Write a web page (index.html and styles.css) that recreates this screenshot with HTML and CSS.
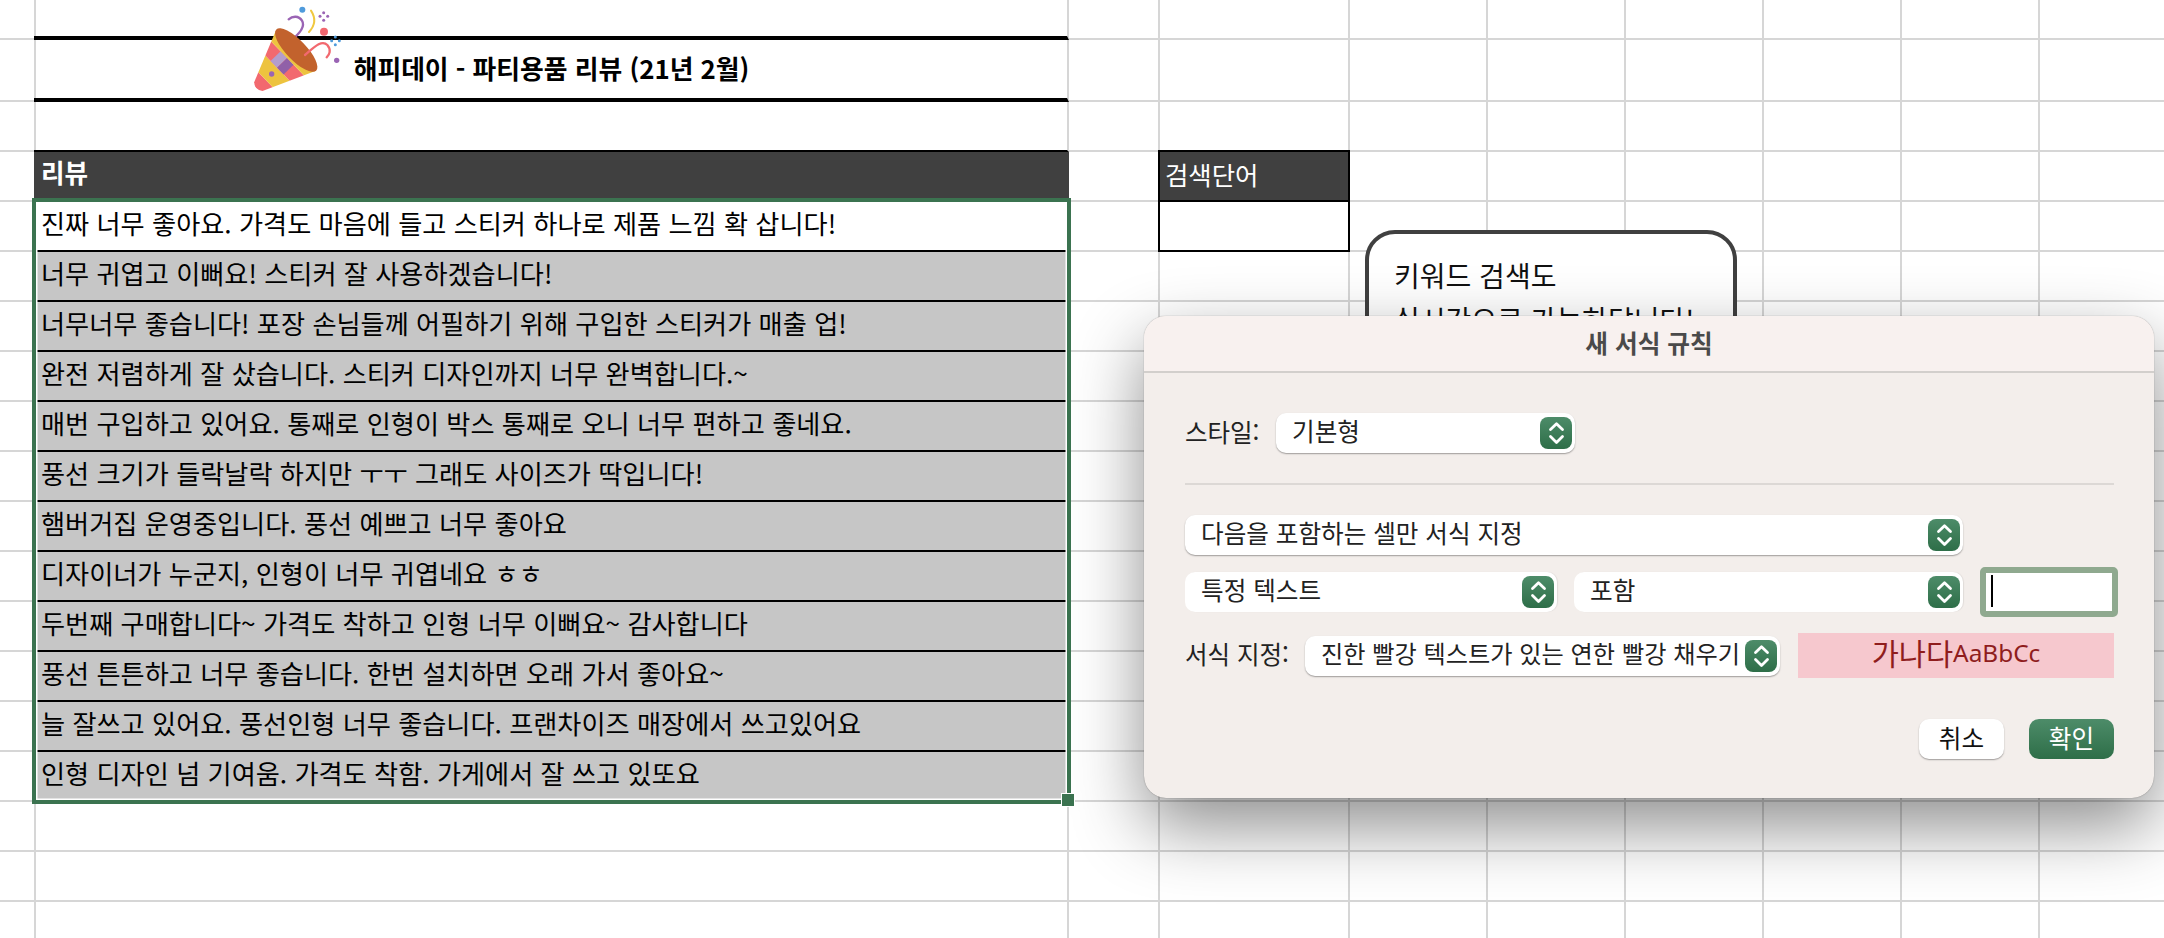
FILE: index.html
```html
<!DOCTYPE html>
<html lang="ko">
<head>
<meta charset="utf-8">
<title>새 서식 규칙</title>
<link rel="stylesheet" href="styles.css">
</head>
<body>
<main class="sheet">
  <div class="grid">
    <!-- row 0 -->
    <div class="c"></div><div class="c band"></div><div class="c"></div><div class="c"></div><div class="c"></div><div class="c"></div><div class="c"></div><div class="c"></div><div class="c"></div><div class="c"></div>
    <!-- row 1 -->
    <div class="c"></div><div class="c band title">해피데이 - 파티용품 리뷰 (21년 2월)</div><div class="c"></div><div class="c"></div><div class="c"></div><div class="c"></div><div class="c"></div><div class="c"></div><div class="c"></div><div class="c"></div>
    <!-- row 2 -->
    <div class="c"></div><div class="c blank"></div><div class="c"></div><div class="c"></div><div class="c"></div><div class="c"></div><div class="c"></div><div class="c"></div><div class="c"></div><div class="c"></div>
    <!-- row 3 -->
    <div class="c"></div><div class="c head">리뷰</div><div class="c"></div><div class="c search-head">검색단어</div><div class="c"></div><div class="c"></div><div class="c"></div><div class="c"></div><div class="c"></div><div class="c"></div>
    <!-- row 4 -->
    <div class="c"></div><div class="c review first">진짜 너무 좋아요. 가격도 마음에 들고 스티커 하나로 제품 느낌 확 삽니다!</div><div class="c"></div><div class="c search-input"></div><div class="c"></div><div class="c"></div><div class="c"></div><div class="c"></div><div class="c"></div><div class="c"></div>
    <!-- row 5 -->
    <div class="c"></div><div class="c review">너무 귀엽고 이뻐요! 스티커 잘 사용하겠습니다!</div><div class="c"></div><div class="c"></div><div class="c"></div><div class="c"></div><div class="c"></div><div class="c"></div><div class="c"></div><div class="c"></div>
    <!-- row 6 -->
    <div class="c"></div><div class="c review">너무너무 좋습니다! 포장 손님들께 어필하기 위해 구입한 스티커가 매출 업!</div><div class="c"></div><div class="c"></div><div class="c"></div><div class="c"></div><div class="c"></div><div class="c"></div><div class="c"></div><div class="c"></div>
    <!-- row 7 -->
    <div class="c"></div><div class="c review">완전 저렴하게 잘 샀습니다. 스티커 디자인까지 너무 완벽합니다.~</div><div class="c"></div><div class="c"></div><div class="c"></div><div class="c"></div><div class="c"></div><div class="c"></div><div class="c"></div><div class="c"></div>
    <!-- row 8 -->
    <div class="c"></div><div class="c review">매번 구입하고 있어요. 통째로 인형이 박스 통째로 오니 너무 편하고 좋네요.</div><div class="c"></div><div class="c"></div><div class="c"></div><div class="c"></div><div class="c"></div><div class="c"></div><div class="c"></div><div class="c"></div>
    <!-- row 9 -->
    <div class="c"></div><div class="c review">풍선 크기가 들락날락 하지만 ㅜㅜ 그래도 사이즈가 딱입니다!</div><div class="c"></div><div class="c"></div><div class="c"></div><div class="c"></div><div class="c"></div><div class="c"></div><div class="c"></div><div class="c"></div>
    <!-- row 10 -->
    <div class="c"></div><div class="c review">햄버거집 운영중입니다. 풍선 예쁘고 너무 좋아요</div><div class="c"></div><div class="c"></div><div class="c"></div><div class="c"></div><div class="c"></div><div class="c"></div><div class="c"></div><div class="c"></div>
    <!-- row 11 -->
    <div class="c"></div><div class="c review">디자이너가 누군지, 인형이 너무 귀엽네요 ㅎㅎ</div><div class="c"></div><div class="c"></div><div class="c"></div><div class="c"></div><div class="c"></div><div class="c"></div><div class="c"></div><div class="c"></div>
    <!-- row 12 -->
    <div class="c"></div><div class="c review">두번째 구매합니다~ 가격도 착하고 인형 너무 이뻐요~ 감사합니다</div><div class="c"></div><div class="c"></div><div class="c"></div><div class="c"></div><div class="c"></div><div class="c"></div><div class="c"></div><div class="c"></div>
    <!-- row 13 -->
    <div class="c"></div><div class="c review">풍선 튼튼하고 너무 좋습니다. 한번 설치하면 오래 가서 좋아요~</div><div class="c"></div><div class="c"></div><div class="c"></div><div class="c"></div><div class="c"></div><div class="c"></div><div class="c"></div><div class="c"></div>
    <!-- row 14 -->
    <div class="c"></div><div class="c review">늘 잘쓰고 있어요. 풍선인형 너무 좋습니다. 프랜차이즈 매장에서 쓰고있어요</div><div class="c"></div><div class="c"></div><div class="c"></div><div class="c"></div><div class="c"></div><div class="c"></div><div class="c"></div><div class="c"></div>
    <!-- row 15 -->
    <div class="c"></div><div class="c review">인형 디자인 넘 기여움. 가격도 착함. 가게에서 잘 쓰고 있또요</div><div class="c"></div><div class="c"></div><div class="c"></div><div class="c"></div><div class="c"></div><div class="c"></div><div class="c"></div><div class="c"></div>
    <!-- row 16 -->
    <div class="c"></div><div class="c"></div><div class="c"></div><div class="c"></div><div class="c"></div><div class="c"></div><div class="c"></div><div class="c"></div><div class="c"></div><div class="c"></div>
    <!-- row 17 -->
    <div class="c"></div><div class="c"></div><div class="c"></div><div class="c"></div><div class="c"></div><div class="c"></div><div class="c"></div><div class="c"></div><div class="c"></div><div class="c"></div>
    <!-- row 18 -->
    <div class="c"></div><div class="c"></div><div class="c"></div><div class="c"></div><div class="c"></div><div class="c"></div><div class="c"></div><div class="c"></div><div class="c"></div><div class="c"></div>
  </div>

  <svg class="popper" viewBox="0 0 390 300" aria-hidden="true">
    <defs>
      <clipPath id="cone"><path d="M0,-18 Q-16,0 0,18 L158,86 L158,-86 Z"/></clipPath>
    </defs>
    <path d="M178,125 C205,105 228,82 216,62 C206,46 187,48 176,58" fill="none" stroke="#9a64b4" stroke-width="7" stroke-linecap="round"/>
    <path d="M243,32 C258,55 254,78 237,96" fill="none" stroke="#f0c840" stroke-width="6" stroke-linecap="round"/>
    <circle cx="217" cy="29" r="9" fill="#4f9bdc"/>
    <g fill="#9a64b4">
      <circle cx="281" cy="38" r="4.5"/><circle cx="281" cy="61" r="4.5"/><circle cx="270" cy="49" r="4.5"/><circle cx="293" cy="49" r="4.5"/>
    </g>
    <circle cx="282" cy="95" r="12" fill="#f2676f"/>
    <g fill="#4f9bdc">
      <circle cx="316" cy="111" r="4.5"/><circle cx="316" cy="134" r="4.5"/><circle cx="305" cy="122" r="4.5"/><circle cx="328" cy="122" r="4.5"/>
    </g>
    <circle cx="320" cy="181" r="8" fill="#9a64b4"/>
    <g transform="translate(85,260) rotate(-44)">
      <g clip-path="url(#cone)">
        <rect x="-20" y="-100" width="50" height="200" fill="#f2696f"/>
        <rect x="30" y="-100" width="50" height="200" fill="#edc33f"/>
        <rect x="80" y="-100" width="42" height="200" fill="#f2696f"/>
        <rect x="80" y="-30" width="42" height="28" fill="#b39dcc"/>
        <rect x="80" y="-2" width="42" height="28" fill="#9060a8"/>
        <rect x="122" y="-100" width="40" height="200" fill="#edc33f"/>
      </g>
      <ellipse cx="158" cy="0" rx="30" ry="86" fill="#c2622d"/>
    </g>
    <circle cx="125" cy="222" r="8" fill="#9a64b4"/>
    <path d="M225,165 C252,142 275,118 292,135 C305,150 298,165 290,172" fill="none" stroke="#f2696f" stroke-width="7" stroke-linecap="round"/>
  </svg>

  <div class="selection"><span class="handle"></span></div>

  <aside class="note">
    <p>키워드 검색도</p>
    <p>실시간으로 가능하답니다!</p>
  </aside>

  <section class="dialog">
    <header class="dialog-title">새 서식 규칙</header>
    <div class="dialog-body">
      <div class="row row-style">
        <label class="lbl">스타일:</label>
        <div class="select w-style"><span>기본형</span><svg class="stepper" viewBox="0 0 32 32"><path d="M10.5 12.5 16.5 6.8 22.5 12.5M10.5 19.5 16.5 25.5 22.5 19.5"/></svg></div>
      </div>
      <hr class="divider">
      <div class="row row-scope">
        <div class="select w-scope"><span>다음을 포함하는 셀만 서식 지정</span><svg class="stepper" viewBox="0 0 32 32"><path d="M10.5 12.5 16.5 6.8 22.5 12.5M10.5 19.5 16.5 25.5 22.5 19.5"/></svg></div>
      </div>
      <div class="row row-cond">
        <div class="select flat w-cond-a"><span>특정 텍스트</span><svg class="stepper" viewBox="0 0 32 32"><path d="M10.5 12.5 16.5 6.8 22.5 12.5M10.5 19.5 16.5 25.5 22.5 19.5"/></svg></div>
        <div class="select flat w-cond-b"><span>포함</span><svg class="stepper" viewBox="0 0 32 32"><path d="M10.5 12.5 16.5 6.8 22.5 12.5M10.5 19.5 16.5 25.5 22.5 19.5"/></svg></div>
        <div class="field"><span class="caret"></span></div>
      </div>
      <div class="row row-format">
        <label class="lbl">서식 지정:</label>
        <div class="select w-format"><span>진한 빨강 텍스트가 있는 연한 빨강 채우기</span><svg class="stepper" viewBox="0 0 32 32"><path d="M10.5 12.5 16.5 6.8 22.5 12.5M10.5 19.5 16.5 25.5 22.5 19.5"/></svg></div>
        <div class="preview"><span class="pv-ko">가나다</span><span class="pv-en">AaBbCc</span></div>
      </div>
      <div class="actions">
        <button class="btn">취소</button>
        <button class="btn primary">확인</button>
      </div>
    </div>
  </section>
</main>
</body>
</html>
```
FILE: styles.css
```css
* { box-sizing: border-box; }
html, body { margin: 0; padding: 0; height: 100%; overflow: hidden; background: #fff; }
body { font-family: "Noto Sans CJK KR", "Noto Sans", sans-serif; color: #000; }

.sheet { position: relative; width: 2164px; height: 938px; overflow: hidden; }

.grid {
  display: grid;
  grid-template-columns: 36px 1033px 91px 190px repeat(6, 138px);
  grid-template-rows: 40px 62px 50px repeat(16, 50px);
}
.c {
  border-right: 2px solid #d6d6d6;
  border-bottom: 2px solid #d6d6d6;
  min-width: 0;
  display: flex;
  align-items: center;
  font-size: 26.2px;
  line-height: 1;
  white-space: nowrap;
}

.band { margin-left: -2px; border-bottom: 4px solid #000; }
.title { justify-content: center; font-weight: 700; font-size: 25.8px; padding: 0 0 2px 2px; }
.blank { margin-left: -2px; border-right: 2px solid #d6d6d6; border-bottom: 2px solid #000; }
.head {
  margin-left: -2px; padding: 0 0 10px 7px; background: #404040; color: #fff;
  font-weight: 700; font-size: 25.6px; border-right: 0; border-bottom: 0;
}
.review {
  margin-left: -2px; padding: 0 0 5px 7px; background: #c6c6c6;
  border-bottom: 2px solid #000; border-right: 0;
}
.review.first { background: #fff; }
.search-head {
  margin: -2px 0 0 -2px; padding: 0 0 3px 5px; background: #404040; color: #fff;
  border: 2px solid #000; font-size: 25.4px;
}
.search-input { margin-left: -2px; border: 2px solid #000; border-top: 0; background: #fff; }

.popper { position: absolute; left: 230px; top: 0; width: 130px; height: 100px; }

.selection {
  position: absolute; left: 32px; top: 198px; width: 1039px; height: 606px;
  border: 4px solid #3b7350;
  box-shadow: inset 0 0 0 1.5px #fff;
}
.handle {
  position: absolute; right: -7px; bottom: -6px; width: 12px; height: 12px;
  background: #3b7350; outline: 1.5px solid #fff;
}

.note {
  position: absolute; left: 1365px; top: 230px; width: 372px; height: 210px;
  padding: 19px 25px; background: #fff; border: 4px solid #404040; border-radius: 30px;
  font-size: 28px; line-height: 44px; color: #111;
}
.note p { margin: 0; white-space: nowrap; }

.dialog {
  position: absolute; left: 1144px; top: 316px; width: 1010px; height: 482px;
  background: #f3eeeb; border-radius: 22px;
  box-shadow: 0 0 1px rgba(0,0,0,.5), 0 28px 70px rgba(0,0,0,.45);
  overflow: visible;
  display: flex; flex-direction: column;
}
.dialog-title {
  height: 57px; flex: none; display: flex; align-items: center; justify-content: center;
  background: #f8f1ef; border-bottom: 2px solid #d2cfcc; border-radius: 22px 22px 0 0;
  font-size: 24.7px; font-weight: 700; color: #4a4a4a; padding-bottom: 4px;
}
.dialog-body { flex: 1; padding: 40px 40px 0 41px; display: flex; flex-direction: column; }

.row { display: flex; align-items: center; }
.lbl { font-size: 24.5px; color: #222; white-space: nowrap; margin-right: 17px; padding-bottom: 4px; }
.row-style .lbl { width: 74px; }
.row-format .lbl { width: 103px; }

.select {
  height: 40px; flex: none; display: flex; align-items: center; justify-content: space-between;
  padding: 0 3px 6px 16px; background: #fff; border-radius: 10px;
  box-shadow: 0 1px 1.5px rgba(0,0,0,.35);
  font-size: 24.6px; color: #222; white-space: nowrap;
}
.select.flat { box-shadow: 1px 0 1px rgba(0,0,0,.08); }
.stepper {
  width: 32px; height: 32px; flex: none; margin-top: 6px; border-radius: 8px;
  background: linear-gradient(#4d8c69, #2e6e48);
}
.stepper path { fill: none; stroke: #fff; stroke-width: 2.8; stroke-linecap: round; stroke-linejoin: round; }

.w-style { width: 299px; }
.w-scope { width: 778px; }
.w-cond-a { width: 372px; }
.w-cond-b { width: 389px; }
.w-format { width: 475px; margin-right: 18px; font-size: 24.2px; }

.divider { height: 2px; margin: 30px 0; border: 0; background: #dcd8d5; flex: none; }
.row-cond { margin-top: 12px; gap: 17px; height: 50px; margin-right: -5px; }
.row-format { margin-top: 16px; height: 45px; }

.field {
  width: 138px; height: 50px; flex: none; padding: 2px 0 0 5px; background: #fff;
  border: 6px solid #8fa98f; border-radius: 5px;
  display: flex; align-items: flex-start;
}
.caret { width: 2px; height: 32px; background: #000; }

.preview {
  width: 316px; height: 45px; flex: none; display: flex; align-items: center; justify-content: center;
  background: #f6c8ce; color: #8f1d1d; padding-bottom: 7px;
}
.pv-ko { font-size: 29.5px; }
.pv-en { font-family: "Noto Sans", sans-serif; font-size: 24.4px; }

.actions { margin-top: 41px; display: flex; justify-content: flex-end; gap: 25px; }
.btn {
  width: 85px; height: 40px; padding: 0 0 7px; border: 0; border-radius: 10px;
  background: #fff; color: #111; font-family: inherit; font-size: 24.6px;
  box-shadow: 0 1px 1.5px rgba(0,0,0,.35);
}
.btn.primary { background: linear-gradient(#4d8c69, #2e6e48); color: #fff; box-shadow: none; }
```
